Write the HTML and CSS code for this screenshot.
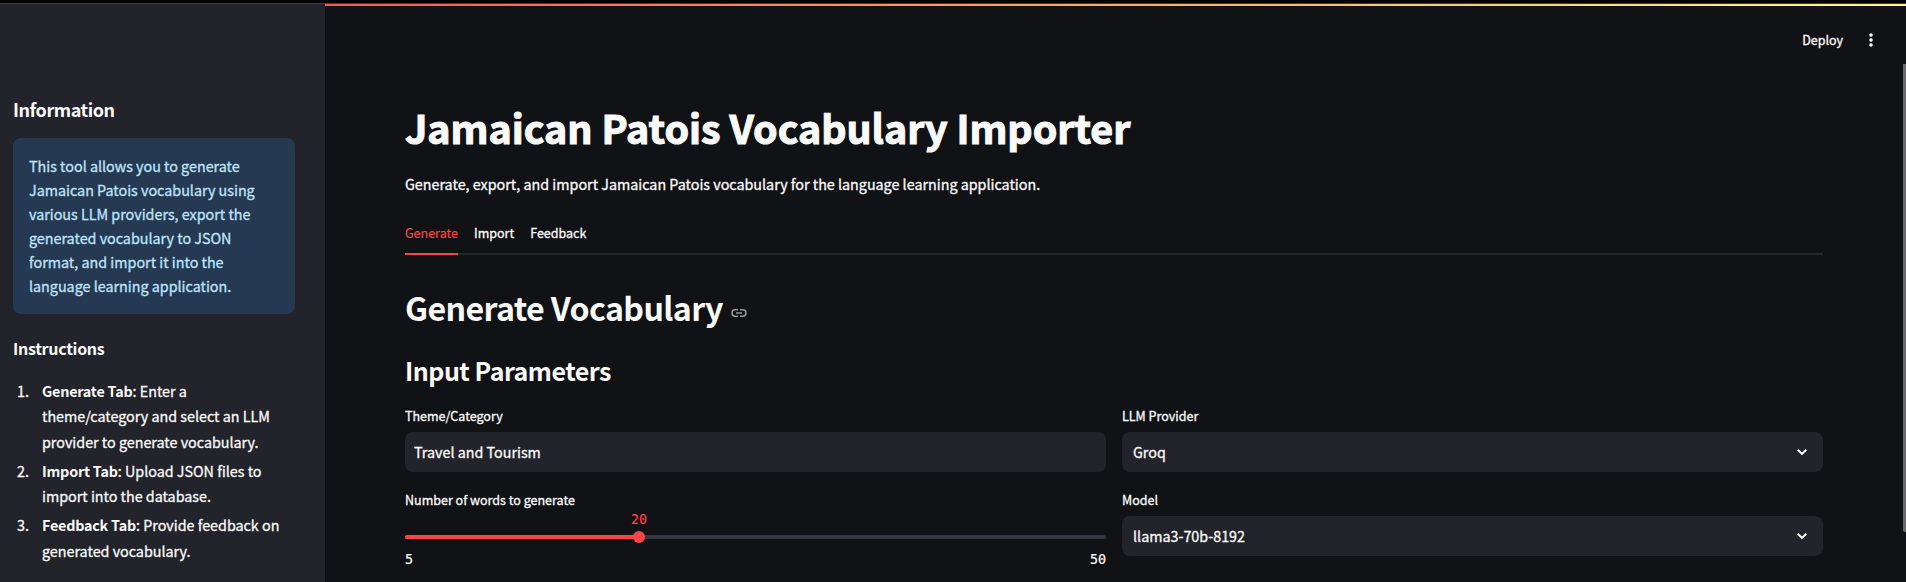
FILE: index.html
```html
<!DOCTYPE html>
<html lang="en">
<head>
<meta charset="utf-8">
<title>Jamaican Patois Vocabulary Importer</title>
<link rel="stylesheet" href="styles.css">
</head>
<body>
<div class="window-edge"></div>
<div class="app">
  <aside class="sidebar">
    <h2 class="side-title"><span>Information</span></h2>
    <div class="info-box">This tool allows you to generate<br>Jamaican Patois vocabulary using<br>various LLM providers, export the<br>generated vocabulary to JSON<br>format, and import it into the<br>language learning application.</div>
    <h3 class="side-subtitle"><span>Instructions</span></h3>
    <ol class="steps">
      <li><span class="num">1.</span><p><strong>Generate Tab</strong>: Enter a<br>theme/category and select an LLM<br>provider to generate vocabulary.</p></li>
      <li><span class="num">2.</span><p><strong>Import Tab</strong>: Upload JSON files to<br>import into the database.</p></li>
      <li><span class="num">3.</span><p><strong>Feedback Tab</strong>: Provide feedback on<br>generated vocabulary.</p></li>
    </ol>
  </aside>
  <main class="main">
    <div class="decoration"></div>
    <header class="toolbar">
      <button class="deploy">Deploy</button>
      <svg class="menu-icon" viewBox="0 0 16 16" width="16" height="16"><circle cx="8" cy="3" r="1.8"/><circle cx="8" cy="8" r="1.8"/><circle cx="8" cy="13" r="1.8"/></svg>
    </header>
    <div class="content">
      <h1 class="title">Jamaican Patois Vocabulary Importer</h1>
      <p class="lead">Generate, export, and import Jamaican Patois vocabulary for the language learning application.</p>
      <nav class="tabs">
        <a class="tab active">Generate</a><a class="tab">Import</a><a class="tab">Feedback</a>
      </nav>
      <h2 class="section"><span>Generate Vocabulary</span>
        <svg class="link-icon" viewBox="0 0 16 8" width="16" height="8"><path d="M7 .8H4.2a3.2 3.2 0 0 0 0 6.4H7M9 .8h2.8a3.2 3.2 0 0 1 0 6.4H9M5 4h6"/></svg>
      </h2>
      <h3 class="subsection">Input Parameters</h3>
      <div class="columns">
        <div class="column">
          <div class="field"><label class="label">Theme/Category</label><div class="control text"><span>Travel and Tourism</span></div></div>
          <div class="field">
            <label class="label">Number of words to generate</label>
            <div class="slider"><div class="track"><div class="fill"></div><div class="thumb"><b class="value">20</b></div></div></div>
            <div class="range"><span>5</span><span>50</span></div>
          </div>
        </div>
        <div class="column">
          <div class="field"><label class="label">LLM Provider</label><div class="control"><span>Groq</span><svg class="chevron" viewBox="0 0 10 6" width="10" height="6"><path d="M.7.8 5 4.9 9.3.8"/></svg></div></div>
          <div class="field"><label class="label">Model</label><div class="control"><span>llama3-70b-8192</span><svg class="chevron" viewBox="0 0 10 6" width="10" height="6"><path d="M.7.8 5 4.9 9.3.8"/></svg></div></div>
        </div>
      </div>
    </div>
    <div class="scrollbar"></div>
  </main>
</div>
</body>
</html>
```
FILE: styles.css
```css
* { box-sizing: border-box; margin: 0; padding: 0; }
body {
  width: 1906px; height: 582px; overflow: hidden;
  background: #111216; color: #fafafa;
  font-family: "Noto Sans CJK SC", "Noto Sans", sans-serif;
  font-size: 14.32px; line-height: 24px;
  white-space: nowrap;
  -webkit-text-stroke: .3px;
}
.window-edge { height: 4px; background: #000; border-bottom: 1px solid #39393b; }
.app { display: flex; height: 578px; }
.sidebar { width: 325px; height: 578px; padding: 93px 30px 0 13px; background: #23232b; flex: none; }
.side-title { font-size: 18px; line-height: 24px; font-weight: 600; letter-spacing: -.45px; margin-bottom: 17px; -webkit-text-stroke: 0; }
.info-box { height: 176px; padding: 16px; border-radius: 8px; background: #253a52; color: #bfe3fb; }
.side-subtitle { font-size: 16px; line-height: 24px; font-weight: 600; letter-spacing: -.3px; margin: 22px 0 17.6px; -webkit-text-stroke: 0; }
.steps { list-style: none; line-height: 25.6px; }
.steps li { display: flex; margin-bottom: 3.2px; }
.num { width: 25px; margin-left: 4px; flex: none; }
.steps strong { font-weight: 600; letter-spacing: -.2px; -webkit-text-stroke: 0; }
.main { position: relative; flex: 1; }
.decoration { height: 2px; background: linear-gradient(90deg, #ff5a4f, #fffd80); }
.toolbar { display: flex; justify-content: flex-end; align-items: center; height: 60px; padding: 8px 27px 0 0; gap: 20px; }
.deploy { border: 0; background: none; color: inherit; font: inherit; font-size: 12.5px; line-height: 20px; -webkit-text-stroke: .3px; }
.menu-icon { fill: #fafafa; }
.content { padding: 35px 83px 0 80px; }
.title { font-size: 39.4px; line-height: 52px; font-weight: 700; letter-spacing: -.02px; -webkit-text-stroke: 1.1px; }
.lead { margin-top: 19px; }
.tabs { display: flex; gap: 16px; height: 40px; margin-top: 19px; border-bottom: 2px solid #26272d; font-size: 12.52px; line-height: 36px; }
.tab { height: 40px; }
.tab.active { color: #ff4347; border-bottom: 2px solid #ff4347; -webkit-text-stroke: .15px; }
.section { display: flex; align-items: center; gap: 8px; margin-top: 30px; font-size: 32.2px; line-height: 44px; font-weight: 600; letter-spacing: -.63px; -webkit-text-stroke: 0; }
.link-icon { fill: none; stroke: #95969a; stroke-width: 1.5; margin-top: 12px; }
.subsection { margin-top: 23px; font-size: 25px; line-height: 36px; font-weight: 600; letter-spacing: -.5px; -webkit-text-stroke: 0; }
.columns { display: grid; grid-template-columns: 701px 701px; gap: 16px; margin-top: 16px; }
.column { display: flex; flex-direction: column; gap: 16px; }
.label { display: block; height: 28px; font-size: 12.52px; line-height: 24px; }
.control { display: flex; align-items: center; justify-content: space-between; height: 40px; padding: 0 16px 0 11px; border-radius: 8px; background: #23232b; }
.control.text { padding-left: 9px; }
.chevron { fill: none; stroke: #fafafa; stroke-width: 2; }
.slider { height: 28px; padding-top: 19px; }
.track { position: relative; height: 4px; border-radius: 2px; background: #363740; }
.fill { width: 234px; height: 4px; border-radius: 2px; background: #ff4347; }
.thumb { position: absolute; left: 228px; top: -4px; width: 12px; height: 12px; border-radius: 50%; background: #ff4347; }
.value { position: absolute; left: -4px; width: 20px; top: -21px; text-align: center; font: 400 13.4px/20px "DejaVu Sans Mono", monospace; color: #ff4347; -webkit-text-stroke: .1px; }
.range { display: flex; justify-content: space-between; margin-top: 6px; font: 400 13.4px/20px "DejaVu Sans Mono", monospace; -webkit-text-stroke: .2px; }
.scrollbar { position: absolute; right: 0; top: 60px; width: 3px; height: 468px; background: #6b6b6d; border-radius: 0 0 0 2px; }
```
